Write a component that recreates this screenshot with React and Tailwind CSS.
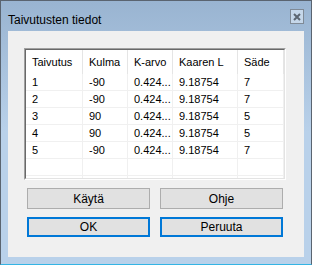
import React from 'react';

const cols = [
  { key: 'Taivutus', w: 'w-[57px]' },
  { key: 'Kulma', w: 'w-[45px]' },
  { key: 'K-arvo', w: 'w-[45px]' },
  { key: 'Kaaren L', w: 'w-[65px]' },
  { key: 'Säde', w: 'w-[46px]' },
];

const rows = [
  ['1', '-90', '0.424...', '9.18754', '7'],
  ['2', '-90', '0.424...', '9.18754', '7'],
  ['3', '90', '0.424...', '9.18754', '5'],
  ['4', '90', '0.424...', '9.18754', '5'],
  ['5', '-90', '0.424...', '9.18754', '7'],
  ['', '', '', '', ''],
];

const Button = ({ children, primary }) => (
  <button
    className={
      primary
        ? 'w-[123px] h-[20px] bg-[#e1e1e1] border-2 border-[#0078d7] text-[12px] leading-none text-black'
        : 'w-[123px] h-[21px] bg-[#e1e1e1] border border-[#adadad] text-[12px] leading-none text-black'
    }
  >
    {children}
  </button>
);

export default function App() {
  return (
    <div className="w-[312px] h-[265px] border border-[#5a6470] border-b-[#34b4e4] bg-gradient-to-b from-[#99b4d1] via-[#b9d1ea] to-[#b9d1ea] flex flex-col font-['Liberation_Sans',Arial,sans-serif] text-black overflow-hidden">
      {/* title bar */}
      <div className="h-[30px] flex items-start justify-between pl-[7px] pr-[7px]">
        <span className="text-[12px] leading-[15px] mt-[12px] text-black">Taivutusten tiedot</span>
        <div className="w-[14px] h-[15px] mt-[8px] border border-[#7f8a96] bg-[#c5d7ea] flex items-center justify-center">
          <svg width="8" height="8" viewBox="0 0 8 8">
            <path d="M1 1 L7 7 M7 1 L1 7" stroke="#5c6672" strokeWidth="2" />
          </svg>
        </div>
      </div>

      {/* client */}
      <div className="mx-[7px] h-[226px] bg-[#f0f0f0] flex flex-col pl-[16px] pt-[17px]">
        <div className="w-[262px] h-[132px] border border-t-[#a0a0a0] border-l-[#a0a0a0] border-r-white border-b-white">
          <div className="w-full h-full border border-t-[#696969] border-l-[#696969] border-r-[#e3e3e3] border-b-[#e3e3e3] bg-white overflow-hidden text-[11px] flex flex-col">
            <div className="flex h-[24px] shrink-0">
              {cols.map((c) => (
                <div key={c.key} className={`${c.w} shrink-0 h-full border-r border-[#e5e5e5] flex items-center pl-[6px]`}>
                  {c.key}
                </div>
              ))}
            </div>
            {rows.map((r, i) => (
              <div key={i} className="flex h-[17px] shrink-0 border-b border-[#f0f0f0]">
                {r.map((v, j) => (
                  <div key={j} className={`${cols[j].w} shrink-0 h-full border-r border-[#f0f0f0] flex items-center pl-[6px]`}>
                    {v}
                  </div>
                ))}
              </div>
            ))}
            <div className="flex flex-1">
              {cols.map((c) => (
                <div key={c.key} className={`${c.w} shrink-0 h-full border-r border-[#f0f0f0]`} />
              ))}
            </div>
          </div>
        </div>

        <div className="flex gap-[10px] mt-[8px] ml-[3px]">
          <Button>Käytä</Button>
          <Button>Ohje</Button>
        </div>
        <div className="flex gap-[10px] mt-[8px] ml-[3px]">
          <Button primary>OK</Button>
          <Button primary>Peruuta</Button>
        </div>
      </div>
    </div>
  );
}
